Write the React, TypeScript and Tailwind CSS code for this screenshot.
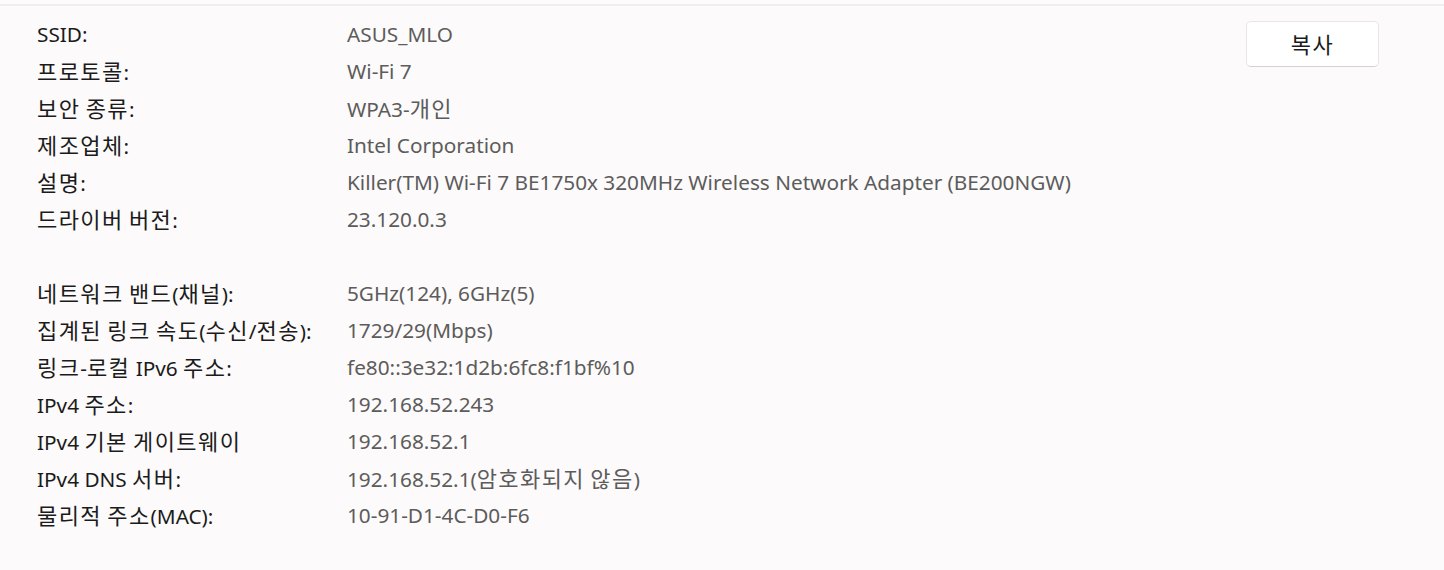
const rows1: [string, string][] = [
  ["SSID:", "ASUS_MLO"],
  ["프로토콜:", "Wi-Fi 7"],
  ["보안 종류:", "WPA3-개인"],
  ["제조업체:", "Intel Corporation"],
  ["설명:", "Killer(TM) Wi-Fi 7 BE1750x 320MHz Wireless Network Adapter (BE200NGW)"],
  ["드라이버 버전:", "23.120.0.3"],
];

const rows2: [string, string][] = [
  ["네트워크 밴드(채널):", "5GHz(124), 6GHz(5)"],
  ["집계된 링크 속도(수신/전송):", "1729/29(Mbps)"],
  ["링크-로컬 IPv6 주소:", "fe80::3e32:1d2b:6fc8:f1bf%10"],
  ["IPv4 주소:", "192.168.52.243"],
  ["IPv4 기본 게이트웨이", "192.168.52.1"],
  ["IPv4 DNS 서버:", "192.168.52.1(암호화되지 않음)"],
  ["물리적 주소(MAC):", "10-91-D1-4C-D0-F6"],
];

// hangul runs get a slightly larger size so widths line up with the original font
function Txt({ text }: { text: string }) {
  const parts = text.split(/([\uac00-\ud7a3]+)/);
  return (
    <>
      {parts.map((p, i) =>
        /[\uac00-\ud7a3]/.test(p) ? (
          <span key={i} className="text-[22px] tracking-[1.4px]">
            {p}
          </span>
        ) : (
          <span key={i}>{p}</span>
        )
      )}
    </>
  );
}

function Row({ label, value }: { label: string; value: string }) {
  return (
    <div className="flex h-[37px] items-center">
      <div className="w-[310px] shrink-0 text-[#1b1b1b]">
        <Txt text={label} />
      </div>
      <div className="text-[#5c5c5c]">
        <Txt text={value} />
      </div>
    </div>
  );
}

export default function App() {
  return (
    <div
      className="h-[570px] w-[1444px] overflow-hidden bg-[#fcfafa] text-[20.75px] leading-[37px]"
      style={{ fontFamily: '"Noto Sans", "Noto Sans CJK KR", sans-serif' }}
    >
      <div className="h-[4px] bg-[#fdfbfb]" />
      <div className="h-[2px] bg-[#f4eded]" />
      <div className="flex pl-[37px] pr-[65px]">
        <div className="flex-1 pt-[10px]">
          {rows1.map(([l, v]) => (
            <Row key={l} label={l} value={v} />
          ))}
          <div className="h-[37px]" />
          {rows2.map(([l, v]) => (
            <Row key={l} label={l} value={v} />
          ))}
        </div>
        <div className="pt-[15px]">
          <button className="flex h-[46px] w-[133px] items-center justify-center rounded-[5px] border border-[#e8e6e6] border-b-[#d4d2d2] bg-white text-[#1b1b1b]">
            <Txt text="복사" />
          </button>
        </div>
      </div>
    </div>
  );
}
